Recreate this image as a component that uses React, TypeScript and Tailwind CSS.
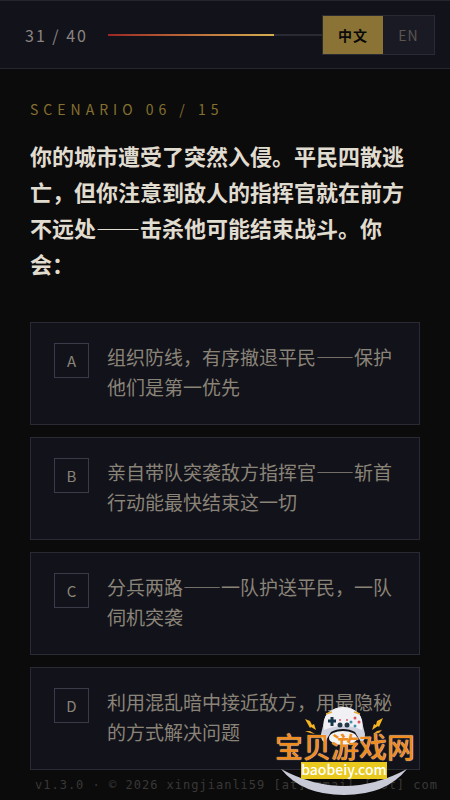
const CJK = "font-['Noto_Sans_CJK_SC',sans-serif]";

const progress = { current: 31, total: 40 };

const options = [
    { key: "A", text: "组织防线，有序撤退平民——保护他们是第一优先" },
    { key: "B", text: "亲自带队突袭敌方指挥官——斩首行动能最快结束这一切" },
    { key: "C", text: "分兵两路——一队护送平民，一队伺机突袭" },
    { key: "D", text: "利用混乱暗中接近敌方，用最隐秘的方式解决问题" },
];

function Header() {
    const percent = (progress.current / progress.total) * 100;

    return (
        <header className="flex items-center pl-[25px] pr-[15px] h-[69px] bg-[#12121a] border-t border-b border-[#25252e]">
            <span className="text-base tracking-[2px] text-[#8a8480] whitespace-nowrap mr-5">
                {progress.current} / {progress.total}
            </span>
            <div className="flex-1 h-[2px] bg-[#2a2a35]">
                <div
                    className="h-full bg-gradient-to-r from-[#9b2525] to-[#d4ad50]"
                    style={{ width: `${percent}%` }}
                />
            </div>
            <div className="flex h-10 border border-[#2a2a35] text-sm">
                <button className="w-[60px] bg-[#8a7335] text-[#0a0a0b] font-bold tracking-[1px]">中文</button>
                <button className="w-[51px] bg-[#1a1a24] text-[#5a5550] tracking-[1px]">EN</button>
            </div>
        </header>
    );
}

function Option({ label, text }: { label: string; text: string }) {
    return (
        <button className="flex items-start gap-[18px] w-full px-[23px] pt-5 pb-[22px] text-left bg-[#12121a] border border-[#2a2a35]">
            <span className="flex items-center justify-center shrink-0 size-[35px] border border-[#3a3a48] text-[15px] leading-6 text-[#8a8478]">
                {label}
            </span>
            <span className="-mt-px text-[19px] leading-[30px] text-[#8a8478]">{text}</span>
        </button>
    );
}

function Watermark() {
    return (
        <div className="absolute right-[34px] bottom-[4px] w-[142px] h-[92px] pointer-events-none">
            <svg viewBox="0 0 142 92" className="absolute inset-0 size-full" aria-hidden="true">
                {/* Smile */}
                <path d="M7 65 Q70 99 133 65 Q112 91 70 91 Q28 91 7 65Z" fill="#c9cad8" />
                {/* Gamepad */}
                <ellipse cx="69" cy="34" rx="14" ry="7" fill="#f3f3f3" />
                <path d="M54 9 Q61 3 69 3 Q78 3 84 9 Q87 11 88 18 L91 30 Q91 38 87 38 Q84 33 81 28 Q76 25 69 25 Q62 25 57 28 Q54 33 51 38 Q47 38 47 30 L50 18 Q51 11 54 9Z" fill="#cfd1df" />
                <path d="M53 10 Q60 3 69 3 Q79 3 85 10 Q90 16 88 26 Q79 22 69 22 Q59 22 50 26 Q48 16 53 10Z" fill="#f1f1f5" />
                <path d="M52 10l6-2M80 8l6 2" stroke="#e5aa35" strokeWidth="1.5" />
                <path d="M58 13v9M54 17h8" stroke="#17364b" strokeWidth="3" />
                <circle cx="81" cy="14" r="1.5" fill="#dc5161" />
                <circle cx="77" cy="18" r="1.5" fill="#3e8faa" />
                <circle cx="85" cy="18" r="1.5" fill="#dc5161" />
                <circle cx="81" cy="22" r="1.5" fill="#3e8faa" />
                <circle cx="66" cy="16" r="1" fill="#dc5161" />
                <circle cx="73" cy="16" r="1" fill="#dc5161" />
                <circle cx="66" cy="21" r="2.5" fill="#233746" />
                <circle cx="73" cy="21" r="2.5" fill="#233746" />
                {/* Sparks */}
                <path d="M31 15l5 2 2 4 2-1 2 6-5-3-1 1zM109 14l-6 3-1 4-2-1-2 6 6-4 1 1z" fill="#f5b421" />
                <path d="M31 27l5 0 5 3-5-1zM108 26l-5 1-4 3 6-1z" fill="#e9a52a" />
            </svg>
            <div className="absolute top-[25px] left-px text-[28px] leading-[34px] font-medium whitespace-nowrap text-[#ef8c20] [text-shadow:0_0_1px_#fff]">
                宝贝游戏网
            </div>
            <div className="absolute top-[58px] left-[27px] w-[86px] h-[17px] bg-[#e9c91d] text-white text-center text-sm leading-[15px] font-medium">
                baobeiy.com
            </div>
        </div>
    );
}

export default function App() {
    return (
        <div lang="zh-CN" className={`relative min-h-screen bg-[#0b0b0c] overflow-hidden ${CJK}`}>
            <Header />

            <main className="px-[30px] pt-7">
                <p className="text-sm leading-6 tracking-[5px] text-[#85702f]">SCENARIO 06 / 15</p>
                <h1 className="mt-4 text-[22px] leading-9 font-bold text-[#e0dcd0]">
                    你的城市遭受了突然入侵。平民四散逃亡，但你注意到敌人的指挥官就在前方不远处——击杀他可能结束战斗。你会：
                </h1>
                <div className="mt-[41px] flex flex-col gap-3">
                    {options.map((option) => (
                        <Option key={option.key} label={option.key} text={option.text} />
                    ))}
                </div>
            </main>

            <footer className="pt-[7px] pr-3 text-right text-xs leading-4 tracking-[1px] whitespace-nowrap text-[#3a3836] font-['DejaVu_Sans_Mono',monospace]">
                v1.3.0 · © 2026 xingjianli59 [at] gmail [dot] com
            </footer>

            <Watermark />
        </div>
    );
}
